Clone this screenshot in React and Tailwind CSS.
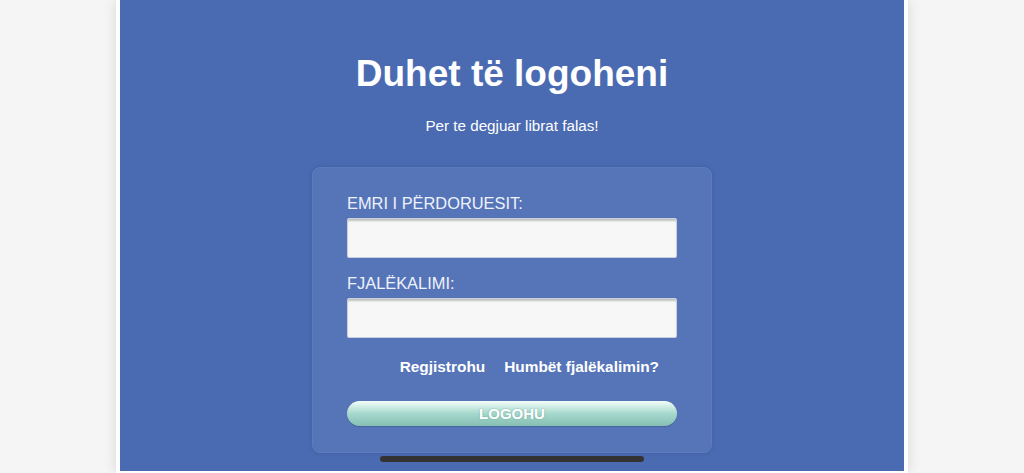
import React from 'react';

const font = { fontFamily: '"Liberation Sans", Arial, sans-serif' };

const Field = ({ label, type = 'text', gap }) => (
  <div className={gap}>
    <label className="block text-[16.4px] leading-[18px] text-[#eef2fb]">{label}</label>
    <input
      type={type}
      className="mt-[6px] block w-full h-[40px] bg-[#f7f7f7] rounded-[2px] border border-[#c9cfdc] shadow-[inset_0_3px_2px_-1px_rgba(0,0,0,0.22)] outline-none px-2 text-[15px] text-gray-800"
    />
  </div>
);

export default function App() {
  return (
    <div className="h-[473px] overflow-hidden bg-[#f5f5f5] flex justify-center" style={font}>
      <div className="w-[792px] h-[473px] bg-white px-[4px] shadow-[0_0_12px_rgba(0,0,0,0.12)]">
        <div className="h-[471px] bg-[#4a6bb2] flex flex-col items-center pt-[52px]">
          <h1 className="text-[37px] leading-[43px] font-bold text-white">Duhet të logoheni</h1>
          <p className="mt-[22px] text-[15.2px] leading-[18px] text-white">Per te degjuar librat falas!</p>

          {/* Card */}
          <div className="mt-[32px] w-[400px] h-[286px] bg-[#5675b9] rounded-[8px] border border-[#5e7cbd] shadow-[0_0_4px_rgba(40,60,120,0.25)] px-[34px] pt-[26px]">
            <Field label="EMRI I PËRDORUESIT:" />
            <Field label="FJALËKALIMI:" type="password" gap="mt-[16px]" />

            <div className="mt-[20px] flex justify-end gap-[19px] pr-[18px] text-[15.4px] leading-[18px] font-bold text-white">
              <a href="#" className="hover:underline">Regjistrohu</a>
              <a href="#" className="hover:underline">Humbët fjalëkalimin?</a>
            </div>

            <button className="mt-[25px] w-full h-[25px] rounded-full bg-gradient-to-b from-[#f4fdfa] via-[#a6d9cd] to-[#86bfb3] text-white font-bold text-[15px] leading-[25px] [text-shadow:0_0_2px_rgba(80,140,130,0.6)] shadow-[0_1px_1px_rgba(0,0,0,0.15)]">
              LOGOHU
            </button>
          </div>

          <div className="mt-[3px] w-[264px] h-[6px] rounded-full bg-[#333]" />
        </div>
      </div>
    </div>
  );
}
